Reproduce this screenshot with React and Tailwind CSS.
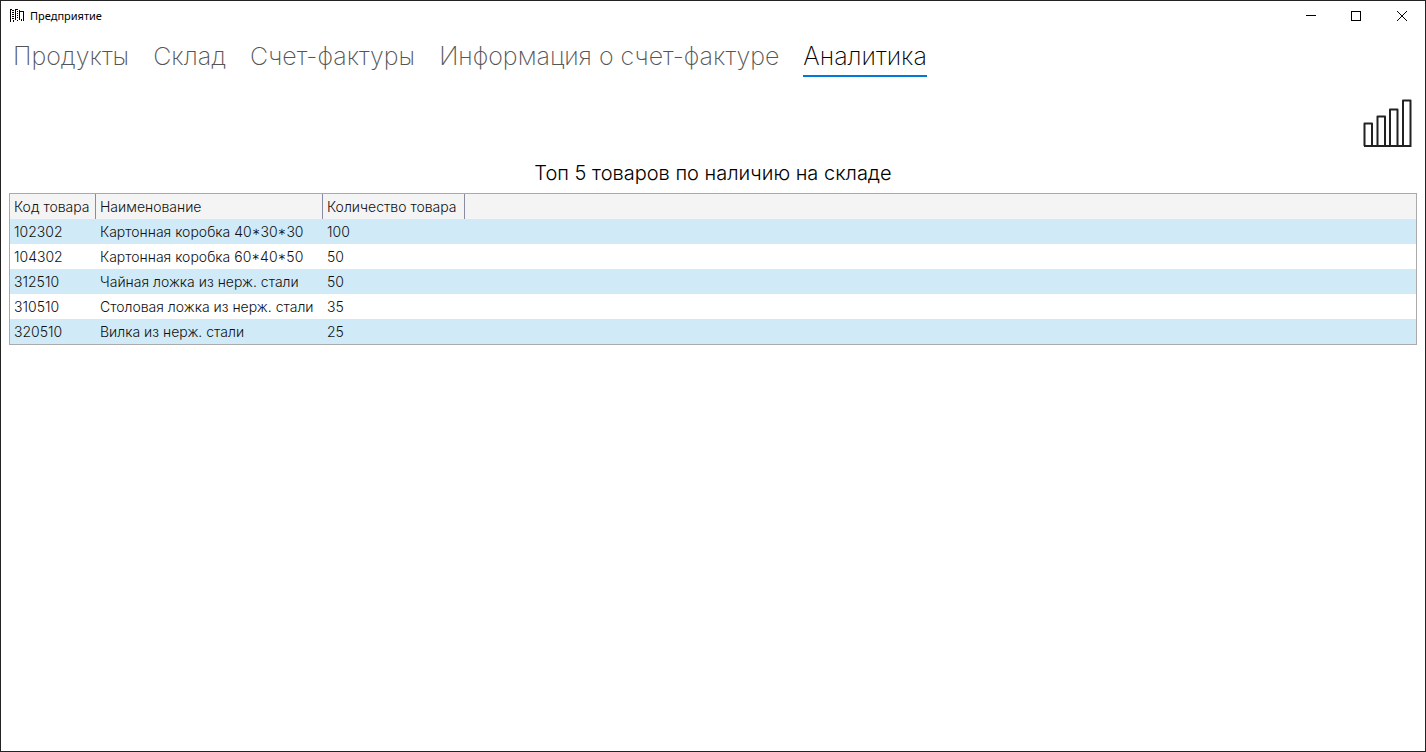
const tabs = ["Продукты", "Склад", "Счет-фактуры", "Информация о счет-фактуре", "Аналитика"];

const goods = [
  ["102302", "Картонная коробка 40*30*30", "100"],
  ["104302", "Картонная коробка 60*40*50", "50"],
  ["312510", "Чайная ложка из нерж. стали", "50"],
  ["310510", "Столовая ложка из нерж. стали", "35"],
  ["320510", "Вилка из нерж. стали", "25"],
];

function TitleBar() {
  return (
    <header className="flex h-[30px] items-center pl-2">
      <svg width="16" height="16" viewBox="0 0 16 16" shapeRendering="crispEdges" aria-hidden="true">
        <path
          fill="#000"
          d="M1 1h1v13H1zM2 1h1v1H2zM6 1h1v11H6zM3 2h2v1H3zM3 4h2v1H3zM3 6h2v1H3zM3 8h2v1H3zM3 10h2v1H3zM7 1h2v1H7zM8 3h1v1H8zM8 5h1v1H8zM8 7h1v1H8zM8 9h1v1H8zM4 12h1v2H4zM10 2h1v10h-1zM11 3h4v1h-4zM14 4h1v9h-1zM12 11h1v2h-1zM8 12h1v1H8z"
        />
      </svg>
      <span className="ml-[5px] grow font-['Noto_Sans','Open_Sans',sans-serif] text-[11px] text-black">Предприятие</span>
      <button type="button" aria-label="Свернуть" className="flex h-full w-11 items-center justify-center">
        <svg width="10" height="10" shapeRendering="crispEdges">
          <path d="M0 4.5h10" stroke="#000" />
        </svg>
      </button>
      <button type="button" aria-label="Развернуть" className="flex h-full w-[46px] items-center justify-center">
        <svg width="10" height="10" shapeRendering="crispEdges">
          <path d="M.5 .5h9v9h-9z" fill="none" stroke="#000" />
        </svg>
      </button>
      <button type="button" aria-label="Закрыть" className="flex h-full w-[46px] items-center justify-center">
        <svg width="10" height="10">
          <path d="M0 0L10 10M10 0L0 10" stroke="#000" />
        </svg>
      </button>
    </header>
  );
}

export default function App() {
  return (
    <div className="flex min-h-screen flex-col border border-[#232323] bg-white font-['Inter',sans-serif] text-black">
      <TitleBar />
      <nav role="tablist" className="flex h-12 gap-6 px-3">
        {tabs.map((name) => (
          <button
            key={name}
            type="button"
            role="tab"
            aria-selected={name === "Аналитика"}
            className="mb-0.5 flex items-center border-b-2 border-transparent pt-1.5 text-[25px] leading-8 font-extralight text-[#555] aria-selected:border-[#0078d7] aria-selected:text-black"
          >
            {name}
          </button>
        ))}
      </nav>
      <main className="flex flex-col px-2">
        <div className="flex justify-end pt-4 pr-1">
          <button type="button" aria-label="Диаграмма">
            <svg className="block" width="50" height="56" viewBox="0 0 50 56" fill="none" stroke="#222" strokeWidth="2" strokeLinejoin="round">
              <path d="M1.500 51V28.500h7.500v22.500M14.500 51V21.500h7.500v29.500M27 51V14.500h7.500v36.500M40 51V5.500h7.500v45.500M1 51h47.500" />
            </svg>
          </button>
        </div>
        <h1 className="mt-2.5 text-center text-xl leading-6 font-light">Топ 5 товаров по наличию на складе</h1>
        <div className="mt-2 border border-[#aaa]">
          <table className="w-full border-separate border-spacing-0 text-left text-sm font-light text-[#111]">
            <thead>
              <tr className="h-[25px] bg-[#f4f4f4]">
                <th className="w-[86px] border-r border-[#8a8aa0] p-0 pl-1 font-light whitespace-nowrap">Код товара</th>
                <th className="w-[227px] border-r border-[#8a8aa0] p-0 pl-1 font-light whitespace-nowrap">Наименование</th>
                <th className="w-[142px] border-r border-[#8a8aa0] p-0 pl-1 font-light whitespace-nowrap">Количество товара</th>
                <td />
              </tr>
            </thead>
            <tbody>
              {goods.map(([code, name, count]) => (
                <tr key={code} className="h-[25px] odd:bg-[#d0ebf7]">
                  <td className="p-0 pl-1 whitespace-nowrap">{code}</td>
                  <td className="p-0 pl-1 whitespace-nowrap">{name}</td>
                  <td className="p-0 pl-1 whitespace-nowrap">{count}</td>
                  <td />
                </tr>
              ))}
            </tbody>
          </table>
        </div>
      </main>
    </div>
  );
}
